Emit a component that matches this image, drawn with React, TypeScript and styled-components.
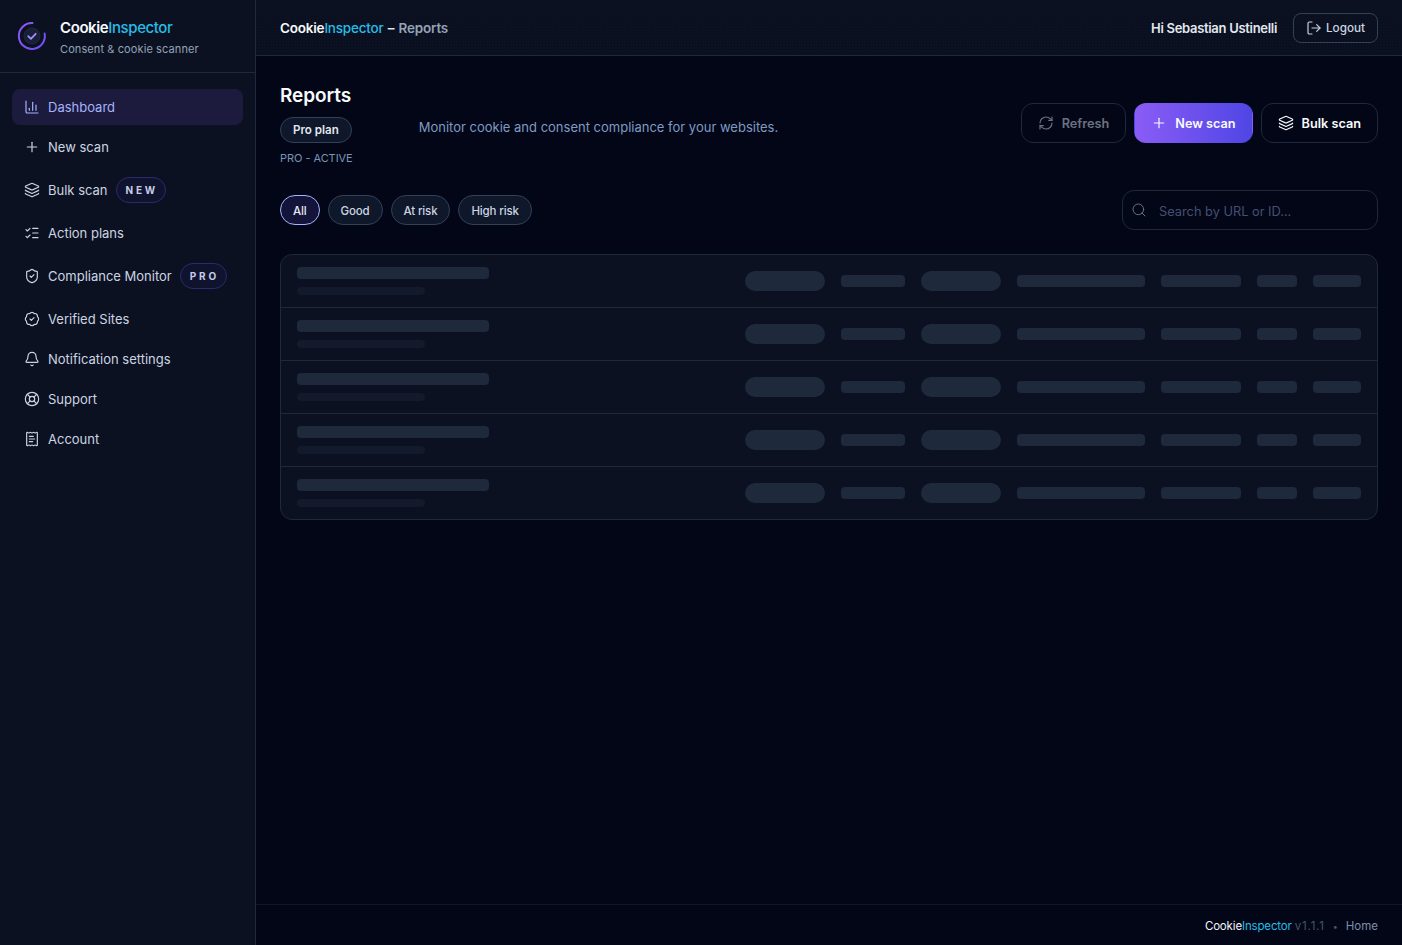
import styled, { createGlobalStyle } from "styled-components";
import {
  BadgeCheck,
  Bell,
  ChartColumn,
  Layers,
  LifeBuoy,
  ListChecks,
  LogOut,
  Plus,
  ReceiptText,
  RefreshCw,
  Search,
  ShieldCheck,
} from "lucide-react";

const GlobalStyle = createGlobalStyle`
  * { box-sizing: border-box; }
  html, body { margin: 0; padding: 0; background: #020617; }
  body {
    font-family: Inter, "Noto Sans", "Liberation Sans", sans-serif;
    color: #cbd5e1;
  }
`;

const navItems = [
  { label: "Dashboard", icon: ChartColumn, active: true },
  { label: "New scan", icon: Plus },
  { label: "Bulk scan", icon: Layers, badge: "NEW" },
  { label: "Action plans", icon: ListChecks },
  { label: "Compliance Monitor", icon: ShieldCheck, badge: "PRO" },
  { label: "Verified Sites", icon: BadgeCheck },
  { label: "Notification settings", icon: Bell },
  { label: "Support", icon: LifeBuoy },
  { label: "Account", icon: ReceiptText },
];

const filters = ["All", "Good", "At risk", "High risk"];
const rows = [0, 1, 2, 3, 4];

function Logo() {
  return (
    <svg width="30" height="30" viewBox="0 0 30 30" fill="none">
      <defs>
        <linearGradient id="ring" x1="0" y1="0" x2="1" y2="1">
          <stop offset="0" stopColor="#8b5cf6" />
          <stop offset="1" stopColor="#6d4df0" />
        </linearGradient>
      </defs>
      <path d="M27.6 12.4A13 13 0 1 1 15.5 2" stroke="url(#ring)" strokeWidth="2" strokeLinecap="round" />
      <circle cx="15" cy="15" r="8" fill="#172036" stroke="#1e293b" />
      <path d="M11.2 15.2l2.7 2.6 4.8-5" stroke="#a78bfa" strokeWidth="1.8" strokeLinecap="round" strokeLinejoin="round" />
    </svg>
  );
}

function App() {
  return (
    <>
      <GlobalStyle />
      <Shell>
        <Sidebar>
          <Brand>
            <Logo />
            <BrandText>
              <BrandName>
                Cookie<Accent>Inspector</Accent>
              </BrandName>
              <BrandTagline>Consent &amp; cookie scanner</BrandTagline>
            </BrandText>
          </Brand>
          <Nav>
            {navItems.map((item) => (
              <NavItem key={item.label} $active={item.active}>
                <item.icon size={16} strokeWidth={1.75} />
                {item.label}
                {item.badge && <NavBadge>{item.badge}</NavBadge>}
              </NavItem>
            ))}
          </Nav>
        </Sidebar>

        <Main>
          <Topbar>
            <Crumb>
              <strong>
                Cookie<Accent>Inspector</Accent>
              </strong>{" "}
              – <CrumbPage>Reports</CrumbPage>
            </Crumb>
            <TopbarRight>
              <Greeting>Hi Sebastian Ustinelli</Greeting>
              <LogoutButton>
                <LogOut size={16} strokeWidth={1.75} />
                Logout
              </LogoutButton>
            </TopbarRight>
          </Topbar>

          <Content>
            <PageHead>
              <TitleGroup>
                <TitleColumn>
                  <Title>Reports</Title>
                  <PlanPill>Pro plan</PlanPill>
                  <PlanStatus>PRO - ACTIVE</PlanStatus>
                </TitleColumn>
                <Description>Monitor cookie and consent compliance for your websites.</Description>
              </TitleGroup>
              <Actions>
                <ActionButton $variant="muted">
                  <RefreshCw size={16} strokeWidth={1.75} />
                  Refresh
                </ActionButton>
                <ActionButton $variant="primary">
                  <Plus size={16} strokeWidth={1.75} />
                  New scan
                </ActionButton>
                <ActionButton>
                  <Layers size={16} strokeWidth={1.75} />
                  Bulk scan
                </ActionButton>
              </Actions>
            </PageHead>

            <FilterRow>
              <Filters>
                {filters.map((f) => (
                  <FilterChip key={f} $active={f === "All"}>
                    {f}
                  </FilterChip>
                ))}
              </Filters>
              <SearchBox>
                <Search size={16} strokeWidth={1.5} />
                <SearchInput placeholder="Search by URL or ID..." />
              </SearchBox>
            </FilterRow>

            <Table>
              {rows.map((r) => (
                <Row key={r}>
                  <RowTitle>
                    <Bar $w={192} />
                    <SubBar />
                  </RowTitle>
                  <RowCells>
                    <Pill />
                    <Bar $w={64} />
                    <Pill />
                    <Bar $w={128} />
                    <Bar $w={80} />
                    <Bar $w={40} />
                    <Bar $w={48} />
                  </RowCells>
                </Row>
              ))}
            </Table>
          </Content>

          <Footer>
            <FooterBrand>
              Cookie<Accent>Inspector</Accent>
            </FooterBrand>
            <FooterVersion>v1.1.1</FooterVersion>
            <FooterDot>•</FooterDot>
            <FooterLink>Home</FooterLink>
          </Footer>
        </Main>
      </Shell>
    </>
  );
}

const Shell = styled.div`
  display: grid;
  grid-template-columns: 256px 1fr;
  min-height: 100vh;
  background: #020617;
`;

const Sidebar = styled.aside`
  background: #0b1121;
  border-right: 1px solid #1e293b;
`;

const Brand = styled.div`
  height: 73px;
  display: flex;
  align-items: center;
  gap: 13px;
  padding: 0 17px;
  border-bottom: 1px solid #1e293b;
`;

const BrandText = styled.div`
  display: flex;
  flex-direction: column;
  gap: 3px;
  padding-top: 3px;
`;

const BrandName = styled.div`
  font-size: 15px;
  line-height: 20px;
  font-weight: 600;
  letter-spacing: -0.4px;
  color: #f8fafc;
`;

const Accent = styled.span`
  font-weight: 500;
  color: #26bde6;
`;

const BrandTagline = styled.div`
  font-size: 11px;
  line-height: 16px;
  letter-spacing: 0.1px;
  color: #94a3b8;
`;

const Nav = styled.nav`
  display: flex;
  flex-direction: column;
  gap: 4px;
  padding: 16px 12px;
`;

const NavItem = styled.a<{ $active?: boolean }>`
  display: flex;
  align-items: center;
  gap: 8px;
  padding: 8px 12px;
  min-height: 36px;
  border-radius: 8px;
  font-size: 13px;
  line-height: 20px;
  white-space: nowrap;
  color: ${(p) => (p.$active ? "#a5b4fc" : "#cbd5e1")};
  background: ${(p) => (p.$active ? "#1c1b3e" : "transparent")};
`;

const NavBadge = styled.span`
  display: inline-flex;
  align-items: center;
  height: 26px;
  padding: 0 7px 0 9px;
  border-radius: 999px;
  border: 1px solid #2a2a6e;
  background: #10132e;
  font-size: 10px;
  font-weight: 700;
  letter-spacing: 2.8px;
  color: #c7cbe8;
`;

const Main = styled.main`
  display: flex;
  flex-direction: column;
  min-width: 0;
`;

const Topbar = styled.header`
  height: 56px;
  display: flex;
  align-items: center;
  justify-content: space-between;
  padding: 0 24px;
  border-bottom: 1px solid #1e293b;
  background:
    linear-gradient(180deg, #0b1121 15%, rgba(11, 17, 33, 0) 60%),
    radial-gradient(circle, rgba(2, 6, 23, 0.55) 0.7px, transparent 0.8px) 0 0 / 3px 3px,
    #0b1121;
`;

const Crumb = styled.div`
  font-size: 13.5px;
  font-weight: 600;
  letter-spacing: -0.2px;
  word-spacing: 1px;
  color: #e2e8f0;
  strong {
    font-weight: 600;
    color: #f8fafc;
  }
`;

const CrumbPage = styled.span`
  color: #94a3b8;
`;

const TopbarRight = styled.div`
  display: flex;
  align-items: center;
  gap: 16px;
`;

const Greeting = styled.span`
  font-size: 13px;
  font-weight: 600;
  letter-spacing: -0.3px;
  color: #e2e8f0;
`;

const LogoutButton = styled.button`
  display: flex;
  align-items: center;
  gap: 4px;
  height: 30px;
  padding: 0 12px;
  border: 1px solid #334155;
  border-radius: 8px;
  background: transparent;
  font: 500 11.7px Inter, sans-serif;
  color: #cbd5e1;
`;

const Content = styled.div`
  flex: 1;
  padding: 24px;
`;

const PageHead = styled.div`
  display: flex;
  align-items: center;
  justify-content: space-between;
  margin-bottom: 24px;
`;

const TitleGroup = styled.div`
  display: flex;
  align-items: center;
  gap: 66px;
`;

const TitleColumn = styled.div`
  display: flex;
  flex-direction: column;
  align-items: flex-start;
`;

const Title = styled.h1`
  margin: 0 0 5px;
  font-size: 19px;
  line-height: 32px;
  font-weight: 600;
  letter-spacing: -0.1px;
  color: #f8fafc;
`;

const PlanPill = styled.span`
  display: inline-flex;
  align-items: center;
  height: 26px;
  padding: 0 12px;
  border-radius: 999px;
  border: 1px solid #334155;
  background: #0f172a;
  font-size: 11.6px;
  font-weight: 600;
  color: #e2e8f0;
`;

const PlanStatus = styled.div`
  margin-top: 7px;
  font-size: 11px;
  line-height: 16px;
  letter-spacing: -0.05px;
  color: #7c93b5;
`;

const Description = styled.p`
  margin: 8px 0 0;
  font-size: 13px;
  line-height: 20px;
  color: #7f9bc2;
`;

const Actions = styled.div`
  display: flex;
  align-items: center;
  gap: 8px;
`;

const ActionButton = styled.button<{ $variant?: "muted" | "primary" }>`
  display: inline-flex;
  align-items: center;
  gap: 8px;
  height: 40px;
  padding: 0 16px;
  border-radius: 12px;
  border: 1px solid ${(p) => (p.$variant === "primary" ? "transparent" : "#1e293b")};
  background: ${(p) =>
    p.$variant === "primary" ? "linear-gradient(90deg, #8b5cf6, #4f46e5)" : "transparent"};
  font: 600 12.7px Inter, sans-serif;
  color: ${(p) => (p.$variant === "muted" ? "#6b7280" : "#f8fafc")};
`;

const FilterRow = styled.div`
  display: flex;
  align-items: center;
  justify-content: space-between;
  margin-bottom: 24px;
`;

const Filters = styled.div`
  display: flex;
  gap: 8px;
`;

const FilterChip = styled.button<{ $active?: boolean }>`
  height: 30px;
  padding: 1px 12px 0;
  border-radius: 999px;
  border: 1px solid ${(p) => (p.$active ? "#a5b4fc" : "#334155")};
  background: ${(p) => (p.$active ? "#14133a" : "#0f172a")};
  font: 500 11.5px Inter, sans-serif;
  letter-spacing: -0.15px;
  color: ${(p) => (p.$active ? "#e2e8f0" : "#cbd5e1")};
`;

const SearchBox = styled.label`
  width: 256px;
  height: 40px;
  display: flex;
  align-items: center;
  gap: 12px;
  padding: 0 8px;
  border: 1px solid #1e293b;
  border-radius: 12px;
  color: #64748b;
`;

const SearchInput = styled.input`
  flex: 1;
  min-width: 0;
  padding: 2px 0 0;
  border: 0;
  outline: 0;
  background: transparent;
  font: 400 12.8px Inter, sans-serif;
  color: #cbd5e1;
  &::placeholder {
    color: #454f72;
    opacity: 1;
  }
`;

const Table = styled.div`
  border: 1px solid #1e293b;
  border-radius: 12px;
  background: #0b1121;
  overflow: hidden;
`;

const Row = styled.div`
  display: flex;
  align-items: center;
  justify-content: space-between;
  height: 53px;
  padding: 0 16px;
  border-bottom: 1px solid #1e293b;
  &:last-child {
    height: 52px;
    border-bottom: 0;
  }
`;

const RowTitle = styled.div`
  display: flex;
  flex-direction: column;
  gap: 8px;
`;

const RowCells = styled.div`
  display: flex;
  align-items: center;
  gap: 16px;
`;

const Bar = styled.div<{ $w: number }>`
  width: ${(p) => p.$w}px;
  height: 12px;
  border-radius: 4px;
  background: #1e293b;
`;

const SubBar = styled.div`
  width: 128px;
  height: 8px;
  border-radius: 4px;
  background: #131a2b;
`;

const Pill = styled.div`
  width: 80px;
  height: 20px;
  border-radius: 10px;
  background: #1e293b;
`;

const Footer = styled.footer`
  height: 41px;
  display: flex;
  align-items: center;
  justify-content: flex-end;
  gap: 3px;
  padding: 2px 24px 0;
  border-top: 1px solid #111827;
  font-size: 11.5px;
`;

const FooterBrand = styled.span`
  color: #f1f5f9;
  letter-spacing: -0.15px;
  ${Accent} {
    font-weight: 400;
  }
`;

const FooterVersion = styled.span`
  letter-spacing: 0.8px;
  color: #475569;
`;

const FooterDot = styled.span`
  margin: 0 5px;
  color: #475569;
  font-size: 9px;
`;

const FooterLink = styled.a`
  color: #7f8ea8;
`;

export default App;
